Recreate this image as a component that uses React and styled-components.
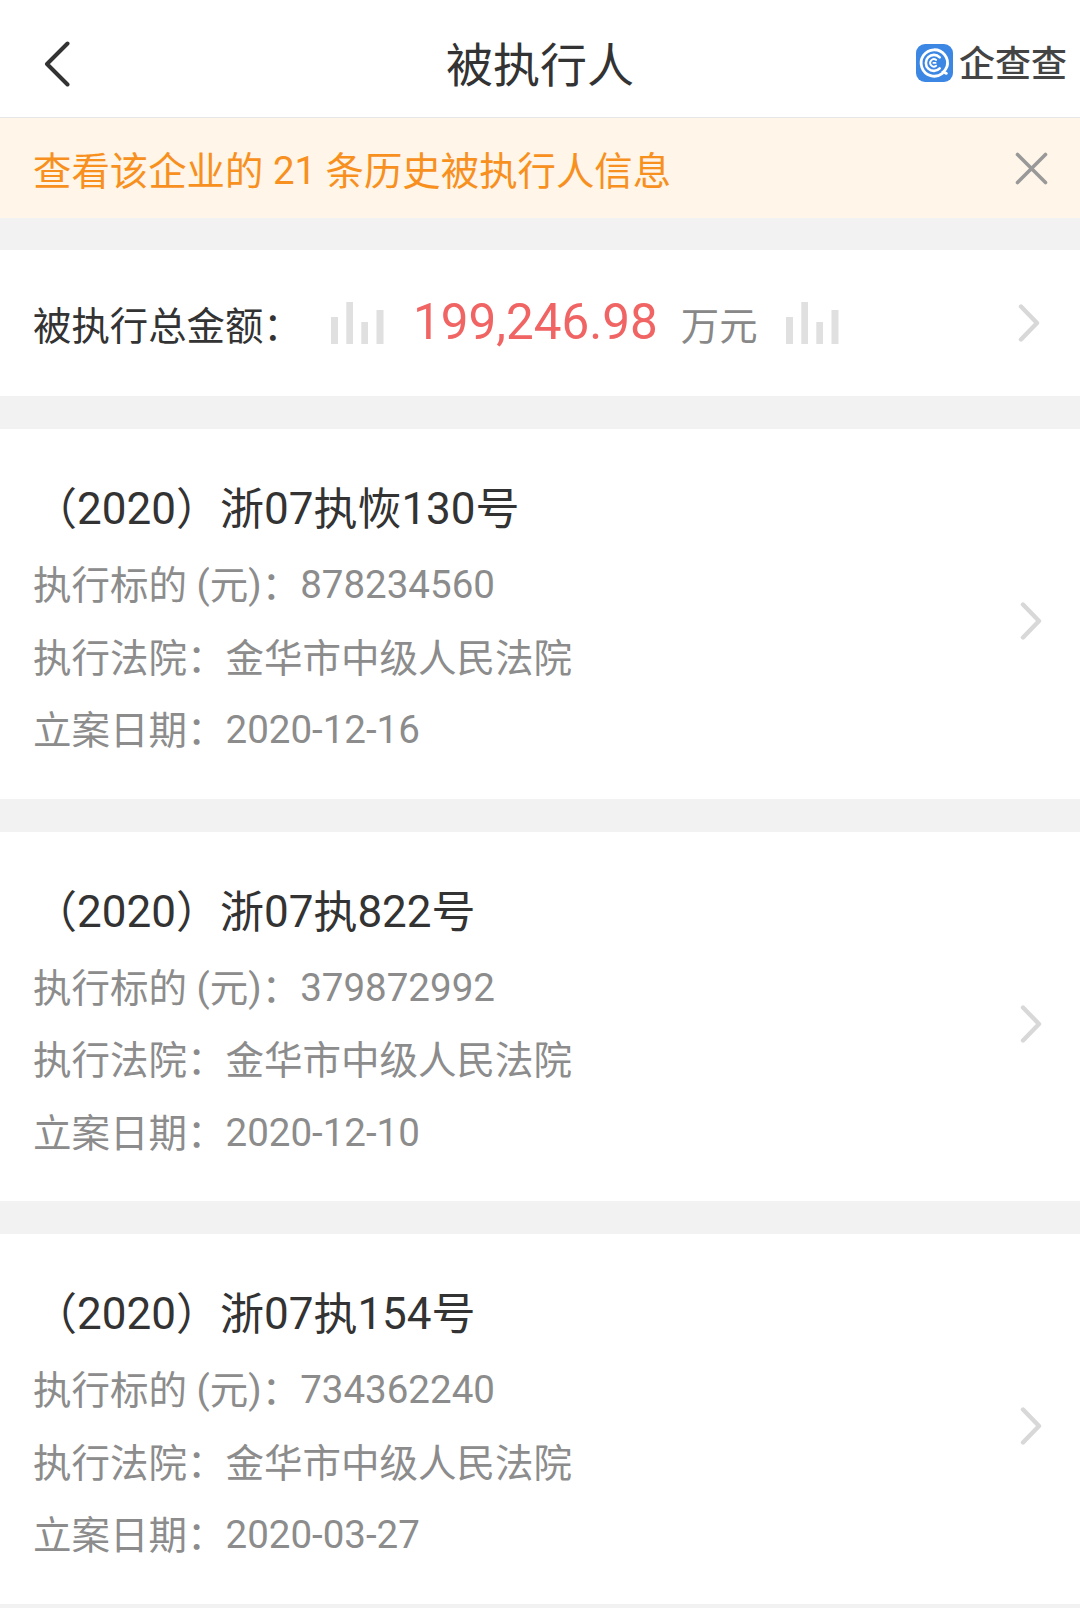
import React from 'react';
import styled, { createGlobalStyle } from 'styled-components';

const records = [
    { caseNo: ['（', '2020', '）浙', '07', '执恢', '130', '号'], amount: '878234560', court: '金华市中级人民法院', date: '2020-12-16' },
    { caseNo: ['（', '2020', '）浙', '07', '执', '822', '号'], amount: '379872992', court: '金华市中级人民法院', date: '2020-12-10' },
    { caseNo: ['（', '2020', '）浙', '07', '执', '154', '号'], amount: '734362240', court: '金华市中级人民法院', date: '2020-03-27' },
]

const Arrow = () => (
    <svg width="22" height="40" viewBox="0 0 22 40" fill="none">
        <path d="M3 3.5 L19 20 L3 36.5" stroke="#d8d8d8" strokeWidth="4.4" strokeLinecap="round" strokeLinejoin="round" />
    </svg>
)

const Bars = () => (
    <svg width="53" height="42" viewBox="0 0 53 42" fill="#e0e0e0">
        <rect x="0" y="15" width="7" height="27" />
        <rect x="15.3" y="0" width="6.7" height="42" />
        <rect x="30.3" y="20" width="6.7" height="22" />
        <rect x="45.5" y="8" width="7" height="34" />
    </svg>
)

const BrandMark = () => (
    <svg width="37" height="38" viewBox="0 0 37 38" fill="none" stroke="#fff" strokeLinecap="round">
        <rect width="37" height="38" rx="9" fill="#3d87e4" stroke="none" />
        <path d="M26.4 29.4 A13.2 13.2 0 1 1 31 22.6 Q29.8 25.8 27.4 27.8 L30.4 29.4" strokeWidth="2.8" />
        <path d="M23.7 13.4 A8 8 0 1 0 23.7 24.4" strokeWidth="2.6" />
        <path d="M20.2 16 A3.7 3.7 0 1 0 20.2 21.8 M17.4 18.9 H19.6" strokeWidth="1.8" />
    </svg>
)

const App = () => {
    return <Page>
        <GlobalStyle />
        <Header>
            <Back>
                <svg width="26" height="46" viewBox="0 0 26 46" fill="none">
                    <path d="M23.5 2.5 L3 23 L23.5 43.5" stroke="#333" strokeWidth="4" strokeLinecap="round" strokeLinejoin="round" />
                </svg>
            </Back>
            <PageTitle>被执行人</PageTitle>
            <Brand>
                <BrandMark />
                <BrandName>企查查</BrandName>
            </Brand>
        </Header>

        <Notice>
            <NoticeText><Han>查看该企业的</Han> 21 <Han>条历史被执行人信息</Han></NoticeText>
            <svg width="33" height="33" viewBox="0 0 33 33" fill="none">
                <path d="M2.5 2.5 L30.5 30.5 M30.5 2.5 L2.5 30.5" stroke="#999" strokeWidth="3.6" strokeLinecap="round" />
            </svg>
        </Notice>

        <Summary>
            <SummaryLabel>被执行总金额：</SummaryLabel>
            <Bars />
            <Total>199,246.98</Total>
            <Unit>万元</Unit>
            <Bars />
            <SummaryArrow><Arrow /></SummaryArrow>
        </Summary>

        {records.map((record, index) => (
            <Card key={index}>
                <div>
                    <CaseNo>
                        {record.caseNo.map((part, i) => i % 2 ? part : <Han key={i}>{part}</Han>)}
                    </CaseNo>
                    <Detail><Han>执行标的</Han> (<Han>元</Han>)<Han>：</Han>{record.amount}</Detail>
                    <Detail><Han>执行法院：{record.court}</Han></Detail>
                    <Detail><Han>立案日期：</Han>{record.date}</Detail>
                </div>
                <CardArrow><Arrow /></CardArrow>
            </Card>
        ))}
    </Page>
};

export default App;

const GlobalStyle = createGlobalStyle`
    * {
        box-sizing: border-box;
    }

    body {
        margin: 0;
        background: #f2f2f2;
        font-family: Roboto, "Noto Sans CJK SC", sans-serif;
    }

    svg {
        display: block;
        flex-shrink: 0;
    }
`

const Page = styled.div`
    width: 1080px;
    height: 1608px;
    overflow: hidden;
    background: #f2f2f2;
    white-space: nowrap;
`

// Chinese glyphs sit slightly below the digit baseline
const Han = styled.span`
    line-height: 1;
    vertical-align: -1px;
`

const Header = styled.header`
    display: grid;
    grid-template-columns: 1fr auto 1fr;
    align-items: center;
    height: 118px;
    padding: 10px 13px 0 44px;
    background: #fff;
    border-bottom: 1px solid #e6e6e6;
`
const Back = styled.div``
const PageTitle = styled.h1`
    margin: 0;
    padding: 4px 31px 0 0;
    color: #333;
    font-size: 47px;
    font-weight: 400;
    line-height: 60px;
`
const Brand = styled.div`
    display: flex;
    align-items: center;
    justify-content: flex-end;
    gap: 6px;
    padding-bottom: 1px;
`
const BrandName = styled.span`
    padding-top: 4px;
    color: #444;
    font-size: 36px;
    font-weight: 500;
    line-height: 40px;
`

const Notice = styled.div`
    display: flex;
    align-items: center;
    justify-content: space-between;
    height: 100px;
    padding: 1px 32px 0 33px;
    background: #fff6e9;
`
const NoticeText = styled.span`
    padding-top: 5px;
    color: #f7901e;
    font-size: 38.4px;
    line-height: 50px;
`

const Summary = styled.section`
    display: flex;
    align-items: center;
    height: 146px;
    margin-top: 32px;
    padding: 0 40px 0 33px;
    background: #fff;
`
const SummaryLabel = styled.span`
    width: 298px;
    padding-top: 7px;
    color: #333;
    font-size: 38.4px;
    line-height: 50px;
`
const Total = styled.span`
    margin-left: 29px;
    padding-bottom: 2px;
    color: #f06464;
    font-size: 49.4px;
    line-height: 60px;
`
const Unit = styled.span`
    margin: 0 28px 0 23px;
    padding-top: 7px;
    color: #888;
    font-size: 38.4px;
    line-height: 50px;
`
const SummaryArrow = styled.div`
    margin-left: auto;
`

const Card = styled.section`
    display: flex;
    justify-content: space-between;
    height: 369.5px;
    margin-top: 33px;
    padding: 50px 38px 0 33px;
    background: #fff;
`
const CaseNo = styled.h2`
    margin: 0 0 10px;
    color: #333;
    font-size: 44px;
    font-weight: 400;
    line-height: 60px;
`
const Detail = styled.p`
    margin: 0;
    color: #8c8c8c;
    font-size: 38.5px;
    line-height: 72.5px;
`
const CardArrow = styled.div`
    padding-top: 122px;
`
